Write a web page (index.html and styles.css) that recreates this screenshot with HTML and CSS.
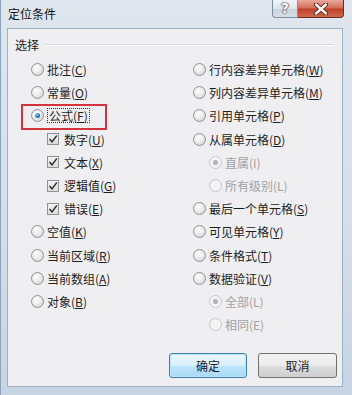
FILE: index.html
```html
<!DOCTYPE html>
<html lang="zh-CN">
<head>
    <meta charset="UTF-8">
    <title>定位条件</title>
    <link rel="stylesheet" href="styles.css">
</head>
<body>
<div class="window">
    <div class="titlebar">
        <span class="title">定位条件</span>
        <div class="caption-btns">
            <div class="cap-help">?</div>
            <div class="cap-close">
                <svg width="16" height="12" viewBox="0 0 16 12">
                    <path d="M3 1.5 L13 10.5 M13 1.5 L3 10.5" stroke="#5a1a12" stroke-width="4.2" stroke-linecap="round"/>
                    <path d="M3 1.5 L13 10.5 M13 1.5 L3 10.5" stroke="#fff" stroke-width="2.4" stroke-linecap="round"/>
                </svg>
            </div>
        </div>
    </div>

    <div class="client">
        <div class="group-head"><span>选择</span><i class="rule"></i></div>

        <div class="cols">
            <div class="col">
                <div class="row"><span class="radio"></span>批注(<u>C</u>)</div>
                <div class="row"><span class="radio"></span>常量(<u>O</u>)</div>
                <div class="row marked"><span class="radio on"></span><span class="focus">公式(<u>F</u>)</span><span class="redbox"></span></div>
                <div class="row sub"><span class="check"><svg width="10" height="10" viewBox="0 0 10 10"><path d="M1.5 5 L4 7.8 L8.8 1.5" fill="none" stroke="#2b2b2b" stroke-width="1.4"/></svg></span>数字(<u>U</u>)</div>
                <div class="row sub"><span class="check"><svg width="10" height="10" viewBox="0 0 10 10"><path d="M1.5 5 L4 7.8 L8.8 1.5" fill="none" stroke="#2b2b2b" stroke-width="1.4"/></svg></span>文本(<u>X</u>)</div>
                <div class="row sub"><span class="check"><svg width="10" height="10" viewBox="0 0 10 10"><path d="M1.5 5 L4 7.8 L8.8 1.5" fill="none" stroke="#2b2b2b" stroke-width="1.4"/></svg></span>逻辑值(<u>G</u>)</div>
                <div class="row sub"><span class="check"><svg width="10" height="10" viewBox="0 0 10 10"><path d="M1.5 5 L4 7.8 L8.8 1.5" fill="none" stroke="#2b2b2b" stroke-width="1.4"/></svg></span>错误(<u>E</u>)</div>
                <div class="row"><span class="radio"></span>空值(<u>K</u>)</div>
                <div class="row"><span class="radio"></span>当前区域(<u>R</u>)</div>
                <div class="row"><span class="radio"></span>当前数组(<u>A</u>)</div>
                <div class="row"><span class="radio"></span>对象(<u>B</u>)</div>
            </div>
            <div class="col">
                <div class="row"><span class="radio"></span>行内容差异单元格(<u>W</u>)</div>
                <div class="row"><span class="radio"></span>列内容差异单元格(<u>M</u>)</div>
                <div class="row"><span class="radio"></span>引用单元格(<u>P</u>)</div>
                <div class="row"><span class="radio"></span>从属单元格(<u>D</u>)</div>
                <div class="row sub off"><span class="radio on"></span>直属(I)</div>
                <div class="row sub off"><span class="radio"></span>所有级别(L)</div>
                <div class="row"><span class="radio"></span>最后一个单元格(<u>S</u>)</div>
                <div class="row"><span class="radio"></span>可见单元格(<u>Y</u>)</div>
                <div class="row"><span class="radio"></span>条件格式(<u>T</u>)</div>
                <div class="row"><span class="radio"></span>数据验证(<u>V</u>)</div>
                <div class="row sub off"><span class="radio on"></span>全部(L)</div>
                <div class="row sub off"><span class="radio"></span>相同(E)</div>
            </div>
        </div>

        <div class="actions">
            <button class="btn default">确定</button>
            <button class="btn">取消</button>
        </div>
    </div>
</div>
</body>
</html>
```

FILE: styles.css
```css
body, html { margin: 0; padding: 0; background: #c8d5e3; font-family: "Noto Sans CJK SC", "Noto Sans", sans-serif; }
.window { width: 352px; height: 395px; box-sizing: border-box; background: linear-gradient(180deg, #dfe6ee 0%, #d4dee9 60%, #c6d4e3 100%); border-left: 1px solid #8da3bc; overflow: hidden; }

.titlebar { height: 28px; display: flex; justify-content: space-between; align-items: flex-start; }
.title { font-size: 12px; line-height: 16px; color: #111; margin: 6px 0 0 7px; }
.caption-btns { display: flex; margin-right: 8px; }
.cap-help { width: 26px; height: 18px; box-sizing: border-box; border: 1px solid #7d8ea3; border-top: none; border-radius: 0 0 0 4px; background: linear-gradient(180deg, #f1f4f8 0%, #dfe5ec 50%, #c9d3de 51%, #d6dee7 100%); color: #fff; font: bold 14px/17px "DejaVu Sans", sans-serif; text-align: center; text-shadow: 0 0 1px #333, 0 0 1px #333, 0 0 2px #555; }
.cap-close { width: 46px; height: 18px; box-sizing: border-box; border: 1px solid #6e2a20; border-left: none; border-top: none; border-radius: 0 0 4px 0; background: linear-gradient(180deg, #e9a99c 0%, #d4705c 45%, #c0412a 55%, #cf6a4f 100%); display: flex; align-items: center; justify-content: center; }

.client { margin-left: 6px; width: 336px; height: 359px; box-sizing: border-box; border: 1px solid #9db0c5; background: #efeff2; padding: 0 5px 8px 7px; display: flex; flex-direction: column; }
.group-head { display: flex; align-items: center; gap: 5px; padding-top: 8px; font-size: 12px; line-height: 16px; color: #1a1a1a; }
.group-head .rule { flex: 1; height: 0; border-top: 1px solid #d6dbe0; border-bottom: 1px solid #fff; margin-right: 3px; }

.cols { display: grid; grid-template-columns: 162px 1fr; margin-top: 5px; padding-left: 16px; }
.row { position: relative; height: 23.2px; display: flex; align-items: center; font-size: 12px; color: #1e1e1e; white-space: nowrap; }
.row u { text-decoration-thickness: 1px; text-underline-offset: 1px; }
.row.sub { padding-left: 16px; }
.row.off { color: #a2a2a2; }

.radio { width: 13px; height: 13px; box-sizing: border-box; border-radius: 50%; border: 1px solid #8f9396; background: radial-gradient(circle at 40% 35%, #ffffff 0%, #ececec 45%, #c9cbcd 100%); margin-right: 3px; display: flex; align-items: center; justify-content: center; }
.radio.on::after { content: ""; width: 5px; height: 5px; border-radius: 50%; background: radial-gradient(circle at 35% 35%, #8fd0f0 0%, #2b82bd 50%, #0e3f62 100%); }
.off .radio { border-color: #c3c5c8; background: #f4f4f6; }
.off .radio.on::after { background: #b0b2b5; }

.check { width: 12px; height: 12px; box-sizing: border-box; border: 1px solid #8f9396; background: linear-gradient(180deg, #f2f2f2, #dcdcdc); margin-right: 5px; display: flex; align-items: center; justify-content: center; }

.focus { border: 1px dotted #333; padding: 0 1px; line-height: 13px; }
.redbox { position: absolute; left: -10px; top: -0.5px; width: 86px; height: 26px; box-sizing: border-box; border: 2px solid #d4333b; }

.actions { margin-top: auto; display: flex; justify-content: flex-end; gap: 11px; }
.btn { width: 79px; height: 25px; box-sizing: border-box; border: 1px solid #707070; border-radius: 3px; background: linear-gradient(180deg, #f3f3f3 0%, #ebebeb 50%, #dddddd 51%, #cfcfcf 100%); font-family: "Noto Sans CJK SC", sans-serif; font-size: 12px; color: #1e1e1e; padding: 0; }
.btn.default { width: 78px; border-color: #3c7fb1; background: linear-gradient(180deg, #eaf6fd 0%, #d9f0fc 50%, #bee6fd 51%, #a7d9f5 100%); box-shadow: inset 0 0 0 1px #bfe3f6; }
```
